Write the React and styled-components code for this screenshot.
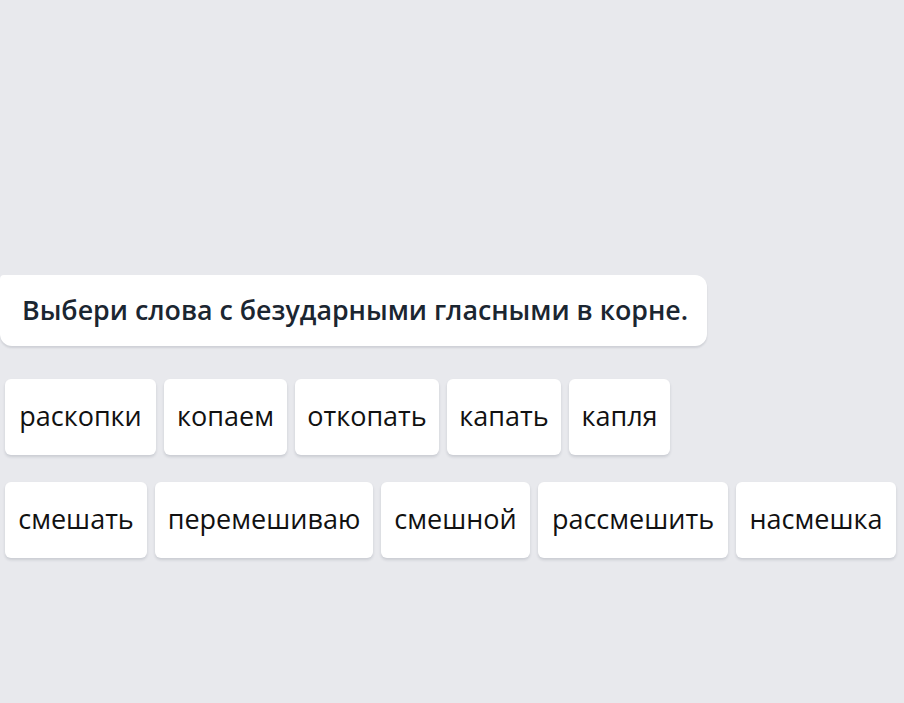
import React from 'react';
import styled, { createGlobalStyle } from 'styled-components';

const GlobalStyle = createGlobalStyle`
  html, body {
    margin: 0;
    padding: 0;
    background: #e8e9ed;
  }
  body {
    font-family: 'Open Sans', 'Noto Sans', sans-serif;
  }
`;

const Page = styled.div`
  width: 904px;
  height: 703px;
  padding-top: 275px;
  box-sizing: border-box;
  overflow: hidden;
`;

const Bubble = styled.div`
  display: inline-block;
  padding: 17px 19px 19px 22px;
  background: #fff;
  border-radius: 4px 12px 12px 12px;
  box-shadow: 0 2px 2px rgba(30, 40, 60, 0.12);
  color: #1b2631;
  font-size: 26.8px;
  font-weight: 600;
  line-height: 35px;
`;

const Words = styled.div`
  display: flex;
  flex-direction: column;
  gap: 27px;
  padding: 33px 0 0 5px;
`;

const Row = styled.div`
  display: flex;
  gap: 8px;
`;

const Word = styled.div`
  width: ${(p) => p.$w}px;
  height: 76px;
  box-sizing: border-box;
  padding-bottom: 3px;
  display: flex;
  align-items: center;
  justify-content: center;
  background: #fff;
  border-radius: 6px;
  box-shadow: 0 2px 3px rgba(30, 40, 60, 0.15);
  color: #111;
  font-size: 27px;
  white-space: nowrap;
`;

const rows = [
  [
    ['раскопки', 151],
    ['копаем', 123],
    ['откопать', 144],
    ['капать', 114],
    ['капля', 101],
  ],
  [
    ['смешать', 142],
    ['перемешиваю', 218],
    ['смешной', 149],
    ['рассмешить', 190],
    ['насмешка', 160],
  ],
];

export default function App() {
  return (
    <Page>
      <GlobalStyle />
      <Bubble>Выбери слова с безударными гласными в корне.</Bubble>
      <Words>
        {rows.map((row, i) => (
          <Row key={i}>
            {row.map(([w, width]) => (
              <Word key={w} $w={width}>
                {w}
              </Word>
            ))}
          </Row>
        ))}
      </Words>
    </Page>
  );
}
